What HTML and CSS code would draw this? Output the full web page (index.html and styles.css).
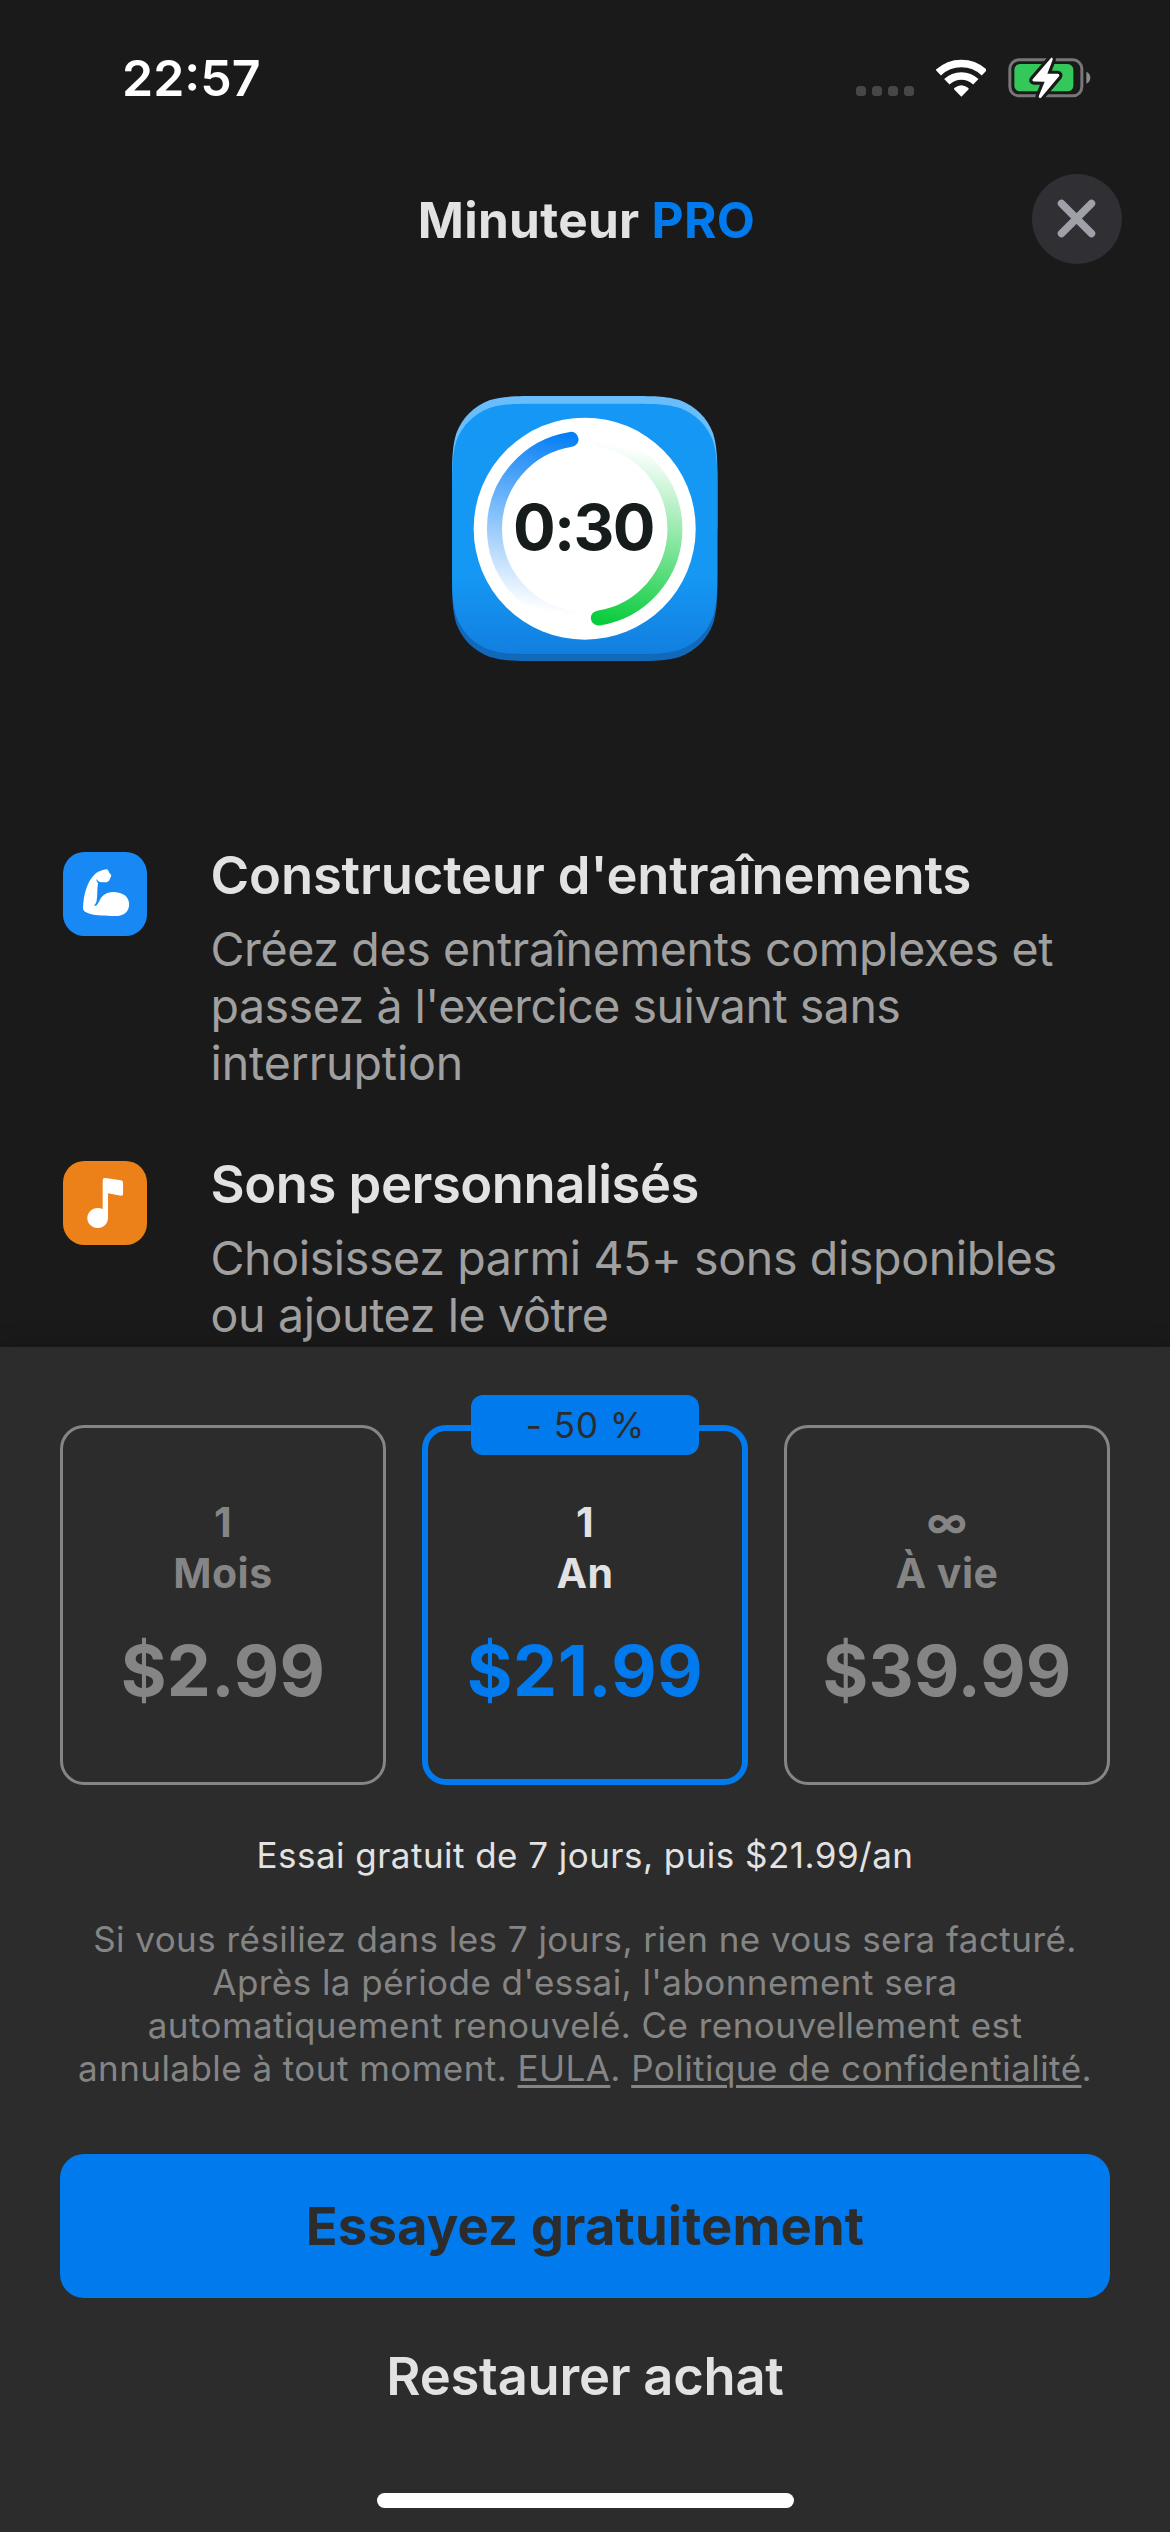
FILE: index.html
```html
<!DOCTYPE html>
<html lang="fr">
<head>
<meta charset="utf-8">
<title>Minuteur PRO</title>
<link rel="stylesheet" href="styles.css">
</head>
<body>
<div class="screen">
  <div class="status-bar">
    <span class="clock">22:57</span>
    <div class="indicators">
      <div class="cell-dots"><i></i><i></i><i></i><i></i></div>
      <svg class="wifi" viewBox="348 85 152 114">
        <g fill="none" stroke="#fff" stroke-width="23">
          <path d="M355 126A100.500 100.500 0 0 1 493 126"/>
          <path d="M380.500 153.500A62.500 62.500 0 0 1 467.500 153.500"/>
        </g>
        <path fill="#fff" d="M424 198L402 175.500Q401 173 404 171Q424 156 444 171Q447 173 446 175.500Z"/>
      </svg>
      <svg class="battery" viewBox="566 80 248 126">
        <rect x="571.5" y="88.500" width="216" height="108" rx="27" fill="none" stroke="#777" stroke-width="9"/>
        <rect x="585" y="101" width="177" height="82" rx="17" fill="#34c759"/>
        <path fill="#8c8c8c" d="M801 124C817 131 817 153 801 160Z"/>
        <path class="bolt-gap" d="M695 83L640 147Q637 153 644 153.500L676 154L658 198Q658 206 665 202L719 138Q722 131 715 130.500L684 130L700 88Q700 79 695 83Z"/>
        <path fill="#fff" d="M695 83L640 147Q637 153 644 153.500L676 154L658 198Q658 206 665 202L719 138Q722 131 715 130.500L684 130L700 88Q700 79 695 83Z"/>
      </svg>
    </div>
  </div>

  <header class="header">
    <h1 class="title">Minuteur <span class="accent">PRO</span></h1>
    <button class="close" aria-label="Fermer">
      <svg viewBox="0 0 90 90"><path d="M29.500 29.500L59.500 59.500M59.500 29.500L29.500 59.500" stroke="#a0a0a8" stroke-width="7.500" stroke-linecap="round"/></svg>
    </button>
  </header>

  <main class="content">
    <svg class="app-icon" viewBox="67 78 796 796">
      <defs>
        <linearGradient id="edge" x1="0" y1="0" x2="0" y2="1">
          <stop offset=".5" stop-color="#68bdfa"/><stop offset=".5" stop-color="#1069b9"/>
        </linearGradient>
        <linearGradient id="face" x1="0" y1="0" x2="0" y2="1">
          <stop offset="0" stop-color="#1598f5"/><stop offset=".68" stop-color="#1598f4"/><stop offset="1" stop-color="#127fe0"/>
        </linearGradient>
        <linearGradient id="blue" gradientUnits="userSpaceOnUse" x1="440" y1="200" x2="340" y2="750">
          <stop offset="0" stop-color="#057ff5"/><stop offset=".95" stop-color="#fff"/>
        </linearGradient>
        <linearGradient id="green" gradientUnits="userSpaceOnUse" x1="490" y1="752" x2="590" y2="202">
          <stop offset="0" stop-color="#08cc3c"/><stop offset=".95" stop-color="#fff"/>
        </linearGradient>
      </defs>
      <path transform="translate(67 78)" fill="url(#edge)" d="M0 272C0 194 0 155 13 112C30 66 66 30 112 13C155 0 194 0 272 0H524C602 0 641 0 684 13C730 30 766 66 783 112C796 155 796 194 796 272V523C796 601 796 640 783 683C766 729 730 765 684 782C641 795 602 795 524 795H272C194 795 155 795 112 782C66 765 30 729 13 683C0 640 0 601 0 523Z"/>
      <path transform="translate(67 101)" fill="url(#face)" d="M0 272C0 194 0 155 13 112C30 66 66 30 112 13C155 0 194 0 272 0H524C602 0 641 0 684 13C730 30 766 66 783 112C796 155 796 194 796 272V479C796 557 796 596 783 639C766 685 730 721 684 738C641 751 602 751 524 751H272C194 751 155 751 112 738C66 721 30 685 13 639C0 596 0 557 0 479Z"/>
      <circle cx="465" cy="476" r="333" fill="#fff"/>
      <g fill="none" stroke-width="45" stroke-linecap="round">
        <path stroke="url(#blue)" d="M424 208A271 271 0 0 0 420 743"/>
        <path stroke="url(#green)" d="M506 744A271 271 0 0 0 510 209"/>
      </g>
      <text class="dial" x="461" y="541">0:30</text>
    </svg>

    <ul class="features">
      <li class="feature">
        <svg class="tile" viewBox="64 66 235 252" preserveAspectRatio="none">
          <rect x="64" y="66" width="235" height="252" rx="60" ry="64" fill="#1888f5"/>
          <path fill="#fff" d="M120 235C121 190 134 152 153 133C163 123 178 119 185 118Q189 118 191 122Q193 129 199 135Q198 142 196 145Q194 154 186 157Q175 157 166 156Q160 152 158 147Q156 155 162 160C159 175 161 195 158 214Q155 224 151 226Q155 230 159 224C168 213 167 205 175 198C185 186 205 184 220 188C240 192 249 207 249 222C249 240 240 254 222 257C200 259 152 258 135 250C125 246 120 242 120 235Z"/>
        </svg>
        <div class="feature-text">
          <h2>Constructeur d'entraînements</h2>
          <p>Créez des entraînements complexes et<br><span class="snug">passez à l'exercice suivant sans</span><br><span class="loose">interruption</span></p>
        </div>
      </li>
      <li class="feature">
        <svg class="tile" viewBox="64 93 235 252" preserveAspectRatio="none">
          <rect x="64" y="93" width="235" height="252" rx="60" ry="64" fill="#ec8019"/>
          <path fill="#fff" d="M175 151Q175 143 182 144L226 151Q232 152 232 158V191Q232 198 226 197L190 190V262C190 282 178 294 161 294C145 294 132 281 132 264C132 248 145 234 161 234Q169 234 175 237Z"/>
        </svg>
        <div class="feature-text">
          <h2 class="tight">Sons personnalisés</h2>
          <p>Choisissez parmi 45+ sons disponibles<br>ou ajoutez le vôtre</p>
        </div>
      </li>
    </ul>
  </main>

  <section class="sheet">
    <div class="plans">
      <div class="plan">
        <div class="term">1<br>Mois</div>
        <div class="price">$2.99</div>
      </div>
      <div class="plan selected">
        <span class="badge">- 50 %</span>
        <div class="term">1<br>An</div>
        <div class="price">$21.99</div>
      </div>
      <div class="plan">
        <div class="term">∞<br>À vie</div>
        <div class="price">$39.99</div>
      </div>
    </div>
    <p class="trial">Essai gratuit de 7 jours, puis $21.99/an</p>
    <p class="legal">Si vous résiliez dans les 7 jours, rien ne vous sera facturé.<br>Après la période d'essai, l'abonnement sera<br>automatiquement renouvelé. Ce renouvellement est<br>annulable à tout moment. <a>EULA</a>. <a>Politique de confidentialité</a>.</p>
    <button class="cta">Essayez gratuitement</button>
    <button class="restore">Restaurer achat</button>
    <div class="home-indicator"></div>
  </section>
</div>
</body>
</html>
```
FILE: styles.css
```css
* { box-sizing: border-box; margin: 0; padding: 0; }

body { background: #1a1a1a; }

.screen {
  width: 1170px;
  height: 2532px;
  display: flex;
  flex-direction: column;
  overflow: hidden;
  background: #1a1a1a;
  color: #e2e2e2;
  font-family: Inter, "Liberation Sans", sans-serif;
  white-space: nowrap;
}

svg { display: block; flex: none; }
button { border: 0; background: none; font: inherit; color: inherit; }

/* Status bar */
.status-bar {
  height: 156px;
  flex: none;
  display: flex;
  justify-content: space-between;
  align-items: center;
  padding: 0 79px 0 122px;
}
.clock { font-size: 50px; line-height: 60px; font-weight: 600; color: #fff; }
.indicators { display: flex; align-items: center; }
.cell-dots { display: flex; gap: 6px; margin: 26px 22px 0 0; }
.cell-dots i { width: 10px; height: 10px; border-radius: 3.5px; background: #474747; }
.wifi { width: 50.7px; height: 38px; margin-right: 22px; }
.battery { width: 82.7px; height: 42px; margin-top: -1px; }
.bolt-gap { fill: #1a1a1a; stroke: #1a1a1a; stroke-width: 19; stroke-linejoin: round; }

/* Header */
.header {
  height: 126px;
  flex: none;
  display: grid;
  grid-template-columns: 1fr auto 1fr;
  align-items: center;
  padding: 0 48px;
}
.title {
  grid-column: 2;
  padding: 2px 0 0 3px;
  font-size: 49.5px;
  line-height: 60px;
  font-weight: 700;
  letter-spacing: .3px;
}
.accent { color: #007aed; }
.close {
  justify-self: end;
  width: 90px;
  height: 90px;
  border-radius: 50%;
  background: #2f2f34;
}

/* Features */
.content { height: 1065px; flex: none; overflow: hidden; padding-top: 114px; }
.app-icon { width: 265.4px; height: 265.4px; margin: 0 auto; }
.dial {
  font-size: 190px;
  font-weight: 700;
  letter-spacing: -5.2px;
  text-anchor: middle;
  fill: #161c1c;
}
.features {
  display: flex;
  flex-direction: column;
  gap: 60px;
  margin-top: 181.6px;
  padding: 0 63px;
  list-style: none;
}
.feature { display: flex; gap: 63.500px; }
.tile { width: 84px; height: 84px; margin-top: 9px; }
.feature-text h2 {
  margin-bottom: 14px;
  font-size: 52.5px;
  line-height: 64px;
  font-weight: 600;
  letter-spacing: -.13px;
}
.feature-text .tight { letter-spacing: -.44px; }
.feature-text p {
  font-size: 46.5px;
  line-height: 57px;
  letter-spacing: -.36px;
  color: #a0a0a0;
}
.snug { letter-spacing: -.49px; }
.loose { letter-spacing: -.12px; }

/* Purchase sheet */
.sheet {
  flex: 1;
  display: flex;
  flex-direction: column;
  padding: 78px 60px 0;
  background: #2c2c2c;
  box-shadow: 0 0 24px rgba(0, 0, 0, .2);
  position: relative;
  text-align: center;
}
.plans { display: grid; grid-template-columns: repeat(3, 1fr); gap: 36px; height: 360px; }
.plan {
  position: relative;
  padding-top: 69px;
  border: 3px solid #858585;
  border-radius: 24px;
  color: #858585;
}
.selected { padding-top: 66px; border: 6px solid #007aed; color: #e2e2e2; }
.term { font-size: 41px; line-height: 51px; font-weight: 700; letter-spacing: .5px; }
.price { margin-top: 30px; font-size: 70px; line-height: 84px; font-weight: 700; letter-spacing: .2px; }
.selected .price { color: #007aed; letter-spacing: .5px; }
.badge {
  position: absolute;
  top: -36px;
  left: 50%;
  width: 228px;
  height: 60px;
  margin-left: -114px;
  padding-left: 1px;
  border-radius: 12px;
  background: #007aed;
  color: #2c2c2c;
  font-size: 35px;
  line-height: 60px;
  letter-spacing: 1px;
}
.trial { margin-top: 49px; font-size: 35px; line-height: 43px; letter-spacing: .46px; }
.legal {
  margin-top: 41px;
  font-size: 35px;
  line-height: 43px;
  letter-spacing: .45px;
  color: #858585;
}
.legal a { text-decoration: underline; text-decoration-thickness: 3px; text-underline-offset: 4px; }
.cta {
  height: 144px;
  flex: none;
  margin-top: 64px;
  border-radius: 24px;
  background: #007aed;
  color: #2c2c2c;
  font-size: 52.5px;
  font-weight: 700;
  letter-spacing: .16px;
}
.restore {
  margin-top: 46px;
  font-size: 52.5px;
  line-height: 64px;
  font-weight: 600;
  letter-spacing: -.24px;
}
.home-indicator {
  width: 417px;
  height: 15px;
  margin: 85px auto 0;
  border-radius: 8px;
  background: #fff;
}
```
